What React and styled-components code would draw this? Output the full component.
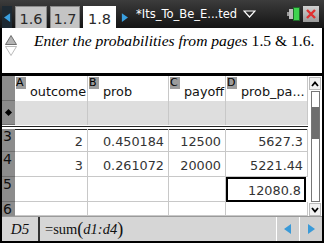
import React from "react";
import styled, { createGlobalStyle } from "styled-components";

const Global = createGlobalStyle`
  html, body {
    margin: 0;
    padding: 0;
    background: #fff;
  }
`;

const Page = styled.div`
  width: 327px;
  height: 247px;
  background: #fff;
  overflow: hidden;
`;

const Window = styled.div`
  width: 320px;
  height: 241px;
  border: 2px solid #000;
  border-top: none;
  display: flex;
  flex-direction: column;
  background: #fff;
`;

// top bar with page tabs
const TopBar = styled.div`
  height: 28px;
  flex: none;
  display: flex;
  align-items: flex-end;
  background: linear-gradient(#3c3c3c, #141414);
  margin: 0 -2px;
  padding-left: 2px;
`;

const ArrowBtn = styled.div`
  width: 10px;
  height: 22px;
  display: flex;
  align-items: center;
  justify-content: center;
  background: ${(p) => (p.dark ? "#1e2a33" : "transparent")};
  margin-right: ${(p) => p.mr || 0}px;
  margin-left: ${(p) => p.ml || 0}px;
`;

const Tab = styled.div`
  width: ${(p) => p.w}px;
  height: 22px;
  margin-right: 3px;
  box-sizing: border-box;
  background: ${(p) => (p.active ? "#fff" : "#c4c4c4")};
  border: 1px solid ${(p) => (p.active ? "#fff" : "#8a8a8a")};
  border-bottom: none;
  display: flex;
  align-items: center;
  justify-content: center;
  font-family: "DejaVu Sans", sans-serif;
  font-size: 14.5px;
  color: #2a2a2a;
  padding-top: 2px;
`;

const Title = styled.div`
  margin-left: 7px;
  height: 28px;
  display: flex;
  align-items: center;
  font-family: "DejaVu Sans", sans-serif;
  font-size: 11.5px;
  color: #fff;
  gap: 6px;
`;

const Icons = styled.div`
  margin-left: auto;
  height: 28px;
  display: flex;
  align-items: center;
  gap: 2px;
  padding-right: 5px;
`;

const CloseBox = styled.div`
  width: 16px;
  height: 16px;
  background: linear-gradient(#d0d0d0, #9a9a9a);
  display: flex;
  align-items: center;
  justify-content: center;
`;

// instruction text
const Instruction = styled.div`
  height: 45px;
  flex: none;
  display: flex;
  align-items: flex-start;
  border-bottom: 3px solid #000;
`;

const Spinner = styled.div`
  width: 29px;
  padding: 7px 0 0 3px;
  display: flex;
  flex-direction: column;
  gap: 1px;
`;

const Prompt = styled.div`
  padding-top: 4px;
  font-family: "Liberation Serif", serif;
  font-size: 15.6px;
  color: #000;
  white-space: nowrap;
  em {
    font-style: italic;
  }
`;

// spreadsheet
const Sheet = styled.div`
  flex: none;
  height: 140px;
  display: flex;
`;

const Grid = styled.div`
  display: grid;
  grid-template-columns: 13px 73px 81px 57px 82px;
  grid-template-rows: 25px 24px 4px 23px 25px 25px 14px;
  overflow: hidden;
`;

const RowHead = styled.div`
  background: #8c8c8c;
  border-bottom: 1px solid ${(p) => (p.last ? "transparent" : "#6e6e6e")};
  box-sizing: border-box;
  font-family: "DejaVu Sans", sans-serif;
  font-size: 14px;
  line-height: 14px;
  color: #111;
  padding-left: 1px;
  position: relative;
`;

const Diamond = styled.span`
  position: absolute;
  left: 4px;
  top: 9px;
  width: 5px;
  height: 5px;
  background: #000;
  transform: rotate(45deg);
`;

const HeadCell = styled.div`
  border-right: 1px solid #c8c8c8;
  box-sizing: border-box;
  display: flex;
  align-items: flex-start;
  font-family: "DejaVu Sans", sans-serif;
  font-size: 12.8px;
  color: #111;
  overflow: hidden;
  white-space: nowrap;
`;

const ColLabel = styled.span`
  background: #9c9c9c;
  color: #000;
  width: 10px;
  height: 12px;
  margin: 1px 4px 0 1px;
  font-size: 11px;
  line-height: 12px;
  text-align: left;
  flex: none;
`;

const HeadText = styled.span`
  margin-top: 8px;
`;

const FormulaRow = styled.div`
  background: #dedede;
  border-right: 1px solid #c8c8c8;
  box-sizing: border-box;
`;

const Divider = styled.div`
  grid-column: 1 / 6;
  border-top: 1px solid #222;
  border-bottom: 1px solid #222;
  box-sizing: border-box;
  height: 4px;
  margin-top: 1px;
`;

const Cell = styled.div`
  border-right: 1px solid #c8c8c8;
  border-bottom: 1px solid #c8c8c8;
  box-sizing: border-box;
  display: flex;
  align-items: center;
  justify-content: flex-end;
  padding: 3px 4px 0 0;
  font-family: "DejaVu Sans", sans-serif;
  font-size: 12.8px;
  color: #333;
  outline: ${(p) => (p.selected ? "2px solid #000" : "none")};
  outline-offset: -2px;
  margin-right: ${(p) => (p.selected ? "2px" : "0")};
`;

const ScrollBar = styled.div`
  width: 14px;
  display: flex;
  flex-direction: column;
  align-items: center;
  padding-top: 1px;
`;

const ScrollArrow = styled.div`
  width: 12px;
  height: 13px;
  display: flex;
  align-items: center;
  justify-content: center;
  background: #f2f2f2;
  border: 1px solid #bbb;
  box-sizing: border-box;
`;

const Track = styled.div`
  flex: 1;
  width: 9px;
  margin: 1px 0;
  border: 1px solid #777;
  display: flex;
  flex-direction: column;
  padding-top: 15px;
  box-sizing: border-box;
`;

const Thumb = styled.div`
  height: 32px;
  background: #6f6f6f;
`;

// formula bar
const FormulaBar = styled.div`
  flex: 1;
  display: flex;
  background: #d6d6d6;
  border-top: 1px solid #9a9a9a;
`;

const CellName = styled.div`
  width: 36px;
  border-right: 2px solid #333;
  display: flex;
  align-items: center;
  justify-content: center;
  font-family: "Liberation Serif", serif;
  font-style: italic;
  font-size: 15px;
  color: #111;
`;

const Formula = styled.div`
  flex: 1;
  display: flex;
  align-items: center;
  padding-left: 5px;
  font-family: "Liberation Serif", serif;
  font-size: 14.5px;
  color: #111;
  em {
    font-style: italic;
  }
`;

const Paren = styled.span`
  font-size: 18px;
  font-weight: 300;
`;

const NavBtn = styled.div`
  width: 22px;
  border-left: 1px solid #fff;
  background: #d0d0d0;
  display: flex;
  align-items: center;
  justify-content: center;
`;

const Tri = ({ dir, color, size = 8 }) => (
  <svg width={size} height={size + 2} viewBox="0 0 8 10">
    {dir === "left" ? (
      <polygon points="7,0 7,10 0,5" fill={color} />
    ) : (
      <polygon points="1,0 1,10 8,5" fill={color} />
    )}
  </svg>
);

const rows = [
  { n: "3", a: "2", b: "0.450184", c: "12500", d: "5627.3" },
  { n: "4", a: "3", b: "0.261072", c: "20000", d: "5221.44" },
  { n: "5", a: "", b: "", c: "", d: "12080.8", sel: true },
  { n: "6", a: "", b: "", c: "", d: "", last: true },
];

export default function App() {
  return (
    <Page>
      <Global />
      <Window>
        <TopBar>
          <ArrowBtn dark mr={3}>
            <Tri dir="left" color="#3aa0e0" size={7} />
          </ArrowBtn>
          <Tab w={32}>1.6</Tab>
          <Tab w={30}>1.7</Tab>
          <Tab w={33} active>
            1.8
          </Tab>
          <ArrowBtn ml={0}>
            <Tri dir="right" color="#3aa0e0" size={7} />
          </ArrowBtn>
          <Title>
            <span>*Its_To_Be_E...ted</span>
            <svg width="13" height="8" viewBox="0 0 13 8">
              <polygon points="1,1 12,1 6.5,7" fill="none" stroke="#fff" strokeWidth="1.2" />
            </svg>
          </Title>
          <Icons>
            <svg width="14" height="16" viewBox="0 0 14 16">
              <rect x="0" y="6" width="3" height="4" fill="#9a9a9a" />
              <rect x="2" y="3" width="4" height="10" fill="#bdbdbd" />
              <rect x="6" y="1" width="7" height="14" fill="#1f6b2a" />
              <rect x="7" y="2" width="5" height="12" fill="#3fd24f" />
            </svg>
            <CloseBox>
              <svg width="12" height="12" viewBox="0 0 12 12">
                <path d="M2 2 L10 10 M10 2 L2 10" stroke="#e03030" strokeWidth="2.4" />
              </svg>
            </CloseBox>
          </Icons>
        </TopBar>

        <Instruction>
          <Spinner>
            <svg width="12" height="10" viewBox="0 0 12 10">
              <polygon points="6,0.5 11.5,9.5 0.5,9.5" fill="#b4b4b4" stroke="#555" strokeWidth="0.8" />
            </svg>
            <svg width="12" height="10" viewBox="0 0 12 10">
              <polygon points="0.5,0.5 11.5,0.5 6,9.5" fill="#fff" stroke="#aaa" strokeWidth="0.8" />
            </svg>
          </Spinner>
          <Prompt>
            <em>Enter the probabilities from pages</em> 1.5 &amp; 1.6.
          </Prompt>
        </Instruction>

        <Sheet>
          <Grid>
            <RowHead />
            <HeadCell>
              <ColLabel>A</ColLabel>
              <HeadText>outcome</HeadText>
            </HeadCell>
            <HeadCell>
              <ColLabel>B</ColLabel>
              <HeadText>prob</HeadText>
            </HeadCell>
            <HeadCell>
              <ColLabel>C</ColLabel>
              <HeadText>payoff</HeadText>
            </HeadCell>
            <HeadCell>
              <ColLabel>D</ColLabel>
              <HeadText>prob_pa...</HeadText>
            </HeadCell>

            <RowHead>
              <Diamond />
            </RowHead>
            <FormulaRow />
            <FormulaRow />
            <FormulaRow />
            <FormulaRow />

            <Divider />

            {rows.map((r) => (
              <React.Fragment key={r.n}>
                <RowHead last={r.last}>{r.n}</RowHead>
                <Cell>{r.a}</Cell>
                <Cell>{r.b}</Cell>
                <Cell>{r.c}</Cell>
                <Cell selected={r.sel}>{r.d}</Cell>
              </React.Fragment>
            ))}
          </Grid>
          <ScrollBar>
            <ScrollArrow>
              <svg width="8" height="6" viewBox="0 0 8 6">
                <path d="M1 5 L4 1.5 L7 5" fill="none" stroke="#000" strokeWidth="1.8" />
              </svg>
            </ScrollArrow>
            <Track>
              <Thumb />
            </Track>
            <ScrollArrow>
              <svg width="8" height="6" viewBox="0 0 8 6">
                <path d="M1 1 L4 4.5 L7 1" fill="none" stroke="#000" strokeWidth="1.8" />
              </svg>
            </ScrollArrow>
          </ScrollBar>
        </Sheet>

        <FormulaBar>
          <CellName>D5</CellName>
          <Formula>
            =sum<Paren>(</Paren>
            <em>d1:d4</em>
            <Paren>)</Paren>
          </Formula>
          <NavBtn>
            <Tri dir="left" color="#3a9ad8" />
          </NavBtn>
          <NavBtn>
            <Tri dir="right" color="#3a9ad8" />
          </NavBtn>
        </FormulaBar>
      </Window>
    </Page>
  );
}
